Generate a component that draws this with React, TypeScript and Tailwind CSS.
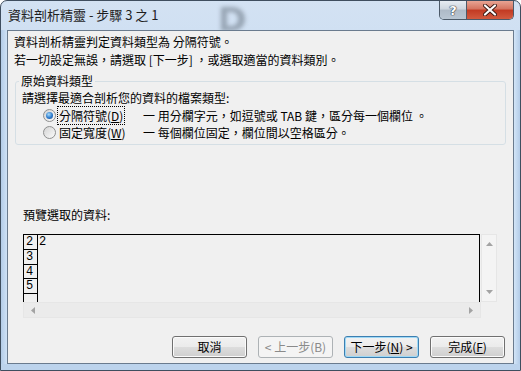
const rows = [
  { n: '2', h: 'h-[15px]', v: '2' },
  { n: '3', h: 'h-[15px]', v: '' },
  { n: '4', h: 'h-[14px]', v: '' },
  { n: '5', h: 'h-[15px]', v: '' },
];

function Radio({ checked }: { checked?: boolean }) {
  return (
    <span className="flex h-[13px] w-[13px] shrink-0 items-center justify-center rounded-full border border-[#8e8f8f] bg-gradient-to-br from-[#d4d4d4] to-[#fbfbfb]">
      {checked && (
        <span className="h-[7px] w-[7px] rounded-full bg-[radial-gradient(circle_at_40%_35%,#a9dcfb,#2b79cb_55%,#1a4e96)]" />
      )}
    </span>
  );
}

function Btn({ children, kind }: { children: React.ReactNode; kind?: 'default' | 'disabled' }) {
  const base = 'flex h-[22px] w-[75px] items-center justify-center rounded-[3px] border text-[12px] leading-none';
  if (kind === 'disabled') {
    return <div className={`${base} border-[#adb2b5] bg-[#f4f4f4] text-[#8a8a8a]`}>{children}</div>;
  }
  if (kind === 'default') {
    return (
      <div className={`${base} border-[#3c7fb1] bg-[linear-gradient(#f2f2f2_0%,#ebebeb_50%,#dddddd_50%,#cfcfcf_100%)] shadow-[inset_0_0_0_1px_#9fd9f6]`}>
        {children}
      </div>
    );
  }
  return (
    <div className={`${base} border-[#707070] bg-[linear-gradient(#f2f2f2_0%,#ebebeb_50%,#dddddd_50%,#cfcfcf_100%)] shadow-[inset_0_0_0_1px_#fbfbfb]`}>
      {children}
    </div>
  );
}

function Arrow({ dir }: { dir: 'up' | 'down' | 'left' | 'right' }) {
  const pts = {
    up: '0,4 3.5,0 7,4',
    down: '0,0 3.5,4 7,0',
    left: '4,0 0,3.5 4,7',
    right: '0,0 4,3.5 0,7',
  }[dir];
  const size = dir === 'up' || dir === 'down' ? 'w-[7px] h-[4px]' : 'w-[4px] h-[7px]';
  return (
    <svg className={size} viewBox={dir === 'up' || dir === 'down' ? '0 0 7 4' : '0 0 4 7'}>
      <polygon points={pts} fill="#a3a3a3" />
    </svg>
  );
}

export default function App() {
  return (
    <div className="relative flex h-[371px] w-[521px] flex-col overflow-hidden rounded-t-[7px] border border-[#3f4e5f] bg-gradient-to-b from-[#d3e2f3] via-[#c0d6ee] to-[#b6cfea] font-['Noto_Sans_CJK_TC','Liberation_Sans',sans-serif] text-[12px] text-black">
      {/* title bar */}
      <div className="relative flex h-[29px] shrink-0 items-start overflow-hidden">
        <svg className="pointer-events-none absolute left-[212px] top-[4px] h-[26px] w-[36px] opacity-50 blur-[2px]" viewBox="0 0 36 26">
          <path d="M8 2 H18 C28 2 32 8 32 14 C32 20 28 26 18 26 H8 Z M14 7 V21 H18 C23 21 25 18 25 14 C25 10 23 7 18 7 Z" fill="#5f6b78" fillRule="evenodd" />
        </svg>
        <div className="relative pl-[7px] pt-[5px] text-[13px] leading-[18px] text-[#1e1e1e]">資料剖析精靈 - 步驟 3 之 1</div>
        <div className="relative ml-auto mr-[6px] flex h-[19px] overflow-hidden rounded-b-[5px] border border-t-0 border-[#4c5a69]">
          <div className="flex w-[26px] items-center justify-center bg-[linear-gradient(#e6ecf2_0%,#cdd6df_45%,#aebac7_50%,#b9c6d3_100%)]">
            <span className="font-['DejaVu_Sans',sans-serif] text-[13px] font-bold leading-none text-white [text-shadow:0_0_1px_#2b3440,0_0_1px_#2b3440,0_0_1px_#2b3440]">?</span>
          </div>
          <div className="flex w-[47px] items-center justify-center border-l border-[#4c5a69] bg-[linear-gradient(#e8a493_0%,#d4735f_45%,#c23a22_50%,#d25a3f_100%)]">
            <svg width="14" height="12" viewBox="0 0 14 12">
              <path d="M2 1.5 L12 10.5 M12 1.5 L2 10.5" stroke="#3b1a14" strokeWidth="4" strokeLinecap="round" />
              <path d="M2 1.5 L12 10.5 M12 1.5 L2 10.5" stroke="#ffffff" strokeWidth="2.2" strokeLinecap="round" />
            </svg>
          </div>
        </div>
      </div>

      {/* body row */}
      <div className="flex h-[334px] shrink-0">
        <div className="w-[6px] bg-gradient-to-r from-[#b3cce8] to-[#cfe2f6]" />
        <div className="flex w-[507px] flex-col border border-[#6a7b8e] bg-[#f0f0f0]">
          <div className="mt-[2px] pl-[6px] leading-[18px]">資料剖析精靈判定資料類型為 分隔符號。</div>
          <div className="pl-[6px] leading-[18px]">若一切設定無誤，請選取 [下一步] ，或選取適當的資料類別。</div>

          <fieldset className="ml-[7px] mt-[5px] w-[491px] rounded-[3px] border border-[#d5dfe5] pb-[3px]">
            <legend className="ml-[3px] px-[2px] leading-[14px]">原始資料類型</legend>
            <div className="mt-[1px] pl-[6px] leading-[18px]">請選擇最適合剖析您的資料的檔案類型:</div>
            <div className="flex h-[17px] items-center pl-[27px]">
              <Radio checked />
              <div className="w-[87px] pl-[1px]">
                <span className="border border-dotted border-black px-[1px] leading-[13px]">
                  分隔符號(<span className="underline">D</span>)
                </span>
              </div>
              <span className="leading-[17px]">一 用分欄字元，如逗號或 TAB 鍵，區分每一個欄位 。</span>
            </div>
            <div className="flex h-[17px] items-center pl-[27px]">
              <Radio />
              <div className="w-[87px] pl-[3px]">
                固定寬度(<span className="underline">W</span>)
              </div>
              <span className="leading-[17px]">一 每個欄位固定，欄位間以空格區分。</span>
            </div>
          </fieldset>

          <div className="ml-[15px] mt-[61px] leading-[18px]">預覽選取的資料:</div>

          <div className="ml-[15px] mt-[10px] flex w-[474px] flex-col">
            <div className="flex h-[68px]">
              <div className="flex w-[458px] border-x border-t border-black font-['Liberation_Mono',monospace] text-[12px]">
                <div className="flex w-[14px] flex-col border-r border-black">
                  {rows.map((r) => (
                    <div key={r.n} className={`${r.h} border-b border-black pl-[2px] leading-[14px]`}>
                      {r.n}
                    </div>
                  ))}
                </div>
                <div className="flex-1 pl-[1px] leading-[14px]">2</div>
              </div>
              <div className="ml-[1px] flex w-[16px] flex-col items-center justify-between border border-[#e6e6e6] bg-[#f4f4f4] py-[7px]">
                <Arrow dir="up" />
                <Arrow dir="down" />
              </div>
            </div>
            <div className="flex h-[16px]">
              <div className="flex w-[458px] items-center justify-between border border-[#e6e6e6] bg-[#ebebeb] px-[7px]">
                <Arrow dir="left" />
                <Arrow dir="right" />
              </div>
            </div>
          </div>

          <div className="mt-[18px] flex gap-[11px] pl-[164px]">
            <Btn>取消</Btn>
            <Btn kind="disabled">&lt; 上一步(B)</Btn>
            <Btn kind="default">
              下一步(<span className="underline">N</span>) &gt;
            </Btn>
            <Btn>
              完成(<span className="underline">F</span>)
            </Btn>
          </div>
        </div>
        <div className="w-[6px] bg-gradient-to-r from-[#d3e5f7] to-[#b3cce8]" />
      </div>
      <div className="h-[6px] shrink-0 bg-[#bcd3ec]" />
    </div>
  );
}
